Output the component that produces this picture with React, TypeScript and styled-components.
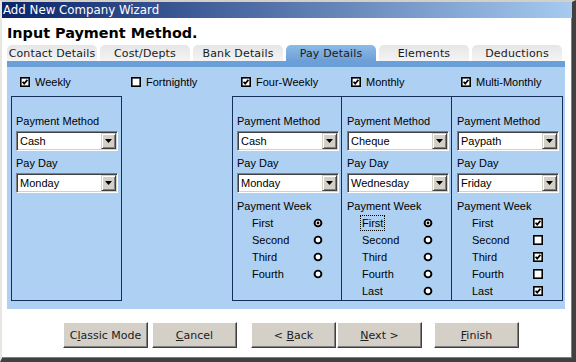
import React from "react";
import styled, { createGlobalStyle } from "styled-components";

const GlobalStyle = createGlobalStyle`
  html, body {
    margin: 0;
    padding: 0;
    background: #ffffff;
    overflow: hidden;
  }
`;

const Window = styled.div`
  width: 576px;
  height: 362px;
  box-sizing: border-box;
  border-style: solid;
  border-width: 2px 4px 4px 2px;
  border-color: #d4d0c8 #404040 #404040 #e8e6e0;
  box-shadow: inset -1px -1px 0 #808080;
  background: #ffffff;
  display: flex;
  flex-direction: column;
  font-family: "Liberation Sans", Arial, sans-serif;
`;

const TitleBar = styled.div`
  height: 16px;
  line-height: 16px;
  padding-left: 1px;
  background: linear-gradient(to right, #0a246a, #a6caf0);
  color: #ffffff;
  font-family: "DejaVu Sans", Verdana, sans-serif;
  font-size: 11.8px;
`;

const Heading = styled.h1`
  margin: 7px 0 0 5px;
  font-family: "DejaVu Sans", Verdana, sans-serif;
  font-size: 14.4px;
  line-height: 17px;
  font-weight: bold;
  color: #000;
`;

const TabRow = styled.div`
  display: flex;
  gap: 3px;
  margin: 3px 0 0 5px;
  height: 16px;
`;

const Tab = styled.div<{ $active?: boolean }>`
  width: 90px;
  height: 16px;
  box-sizing: border-box;
  padding-top: 1px;
  border-radius: 5px 5px 0 0;
  text-align: center;
  font-family: "DejaVu Sans", Verdana, sans-serif;
  font-size: 11px;
  letter-spacing: 0.15px;
  line-height: 15px;
  color: #1a1a1a;
  background: ${(p) =>
    p.$active
      ? "linear-gradient(#8dbbe8, #6d9fd7)"
      : "linear-gradient(#e6e6e6, #f4f4f4)"};
`;

const Panel = styled.div`
  margin-left: 5px;
  width: 554px;
  border-top: 6px solid #6b9fd7;
  background: #aed0f3;
  padding: 0 0 8px 4px;
`;

const Columns = styled.div`
  display: grid;
  grid-template-columns: 111px 110px 110px 110px 111px;
`;

const CheckRow = styled(Columns)`
  margin-top: 9px;
  height: 12px;
  margin-bottom: 8px;
`;

const CheckCell = styled.label`
  display: flex;
  align-items: center;
  gap: 5px;
  padding-left: 9px;
  font-size: 11px;
  color: #000;
`;

const GroupBox = styled.div<{ $col: number; $joined?: boolean }>`
  grid-column: ${(p) => p.$col};
  height: 205px;
  box-sizing: border-box;
  border: 1px solid #14305a;
  border-left: ${(p) => (p.$joined ? "none" : "1px solid #14305a")};
  padding: 17px 2px 0 ${(p) => (p.$joined ? "5px" : "4px")};
  display: flex;
  flex-direction: column;
`;

const FieldLabel = styled.div<{ $gap: number }>`
  margin-top: ${(p) => p.$gap}px;
  font-size: 11px;
  line-height: 14px;
  color: #000;
`;

const Dropdown = styled.div`
  margin-top: 3px;
  width: 102px;
  height: 20px;
  box-sizing: border-box;
  background: #ffffff;
  border-style: solid;
  border-width: 1px;
  border-color: #808080 #ffffff #ffffff #808080;
  box-shadow: inset 1px 1px 0 #404040, inset -1px -1px 0 #d4d0c8;
  display: flex;
  align-items: center;
  padding: 1px 1px 1px 3px;
`;

const DropValue = styled.span`
  flex: 1;
  font-size: 11px;
  color: #000;
`;

const DropButton = styled.span`
  width: 15px;
  height: 16px;
  box-sizing: border-box;
  background: #d4d0c8;
  border-style: solid;
  border-width: 1px;
  border-color: #d4d0c8 #404040 #404040 #d4d0c8;
  box-shadow: inset 1px 1px 0 #ffffff, inset -1px -1px 0 #808080;
  display: flex;
  align-items: center;
  justify-content: center;
`;

const WeekList = styled.div`
  margin-top: 1px;
  display: flex;
  flex-direction: column;
`;

const WeekRow = styled.div`
  height: 17px;
  display: grid;
  grid-template-columns: 61px 12px;
  align-items: center;
  padding-left: 15px;
  font-size: 11px;
  color: #000;
`;

const WeekText = styled.span<{ $focus?: boolean }>`
  justify-self: start;
  outline: ${(p) => (p.$focus ? "1px dotted #000" : "none")};
  outline-offset: 1px;
`;

const ButtonBar = styled.div`
  display: flex;
  margin: 13px 0 0 61px;
`;

const Button = styled.button<{ $gap: number }>`
  margin-left: ${(p) => p.$gap}px;
  width: 85px;
  height: 26px;
  box-sizing: border-box;
  padding: 0;
  background: #d4d0c8;
  border-style: solid;
  border-width: 1px;
  border-color: #ffffff #404040 #404040 #ffffff;
  box-shadow: inset -1px -1px 0 #808080;
  font-family: "DejaVu Sans", Verdana, sans-serif;
  font-size: 11px;
  color: #202020;
`;

const Key = styled.span`
  text-decoration: underline;
`;

const Check = ({ on }: { on: boolean }) => (
  <svg width="10" height="10" viewBox="0 0 10 10">
    <rect x="0.8" y="0.8" width="8.4" height="8.4" fill="#fff" stroke="#000" strokeWidth="1.6" />
    {on && <polyline points="2.6,4.8 4.2,6.6 7.4,2.9" fill="none" stroke="#000" strokeWidth="1.7" />}
  </svg>
);

const Radio = ({ on }: { on: boolean }) => (
  <svg width="10" height="10" viewBox="0 0 10 10">
    <circle cx="5" cy="5" r="3.4" fill="#fff" stroke="#000" strokeWidth="1.9" />
    {on && <circle cx="5" cy="5" r="1.4" fill="#000" />}
  </svg>
);

const Arrow = () => (
  <svg width="7" height="4" viewBox="0 0 7 4">
    <polygon points="0,0 7,0 3.5,4" fill="#000" />
  </svg>
);

const Select = ({ value }: { value: string }) => (
  <Dropdown>
    <DropValue>{value}</DropValue>
    <DropButton>
      <Arrow />
    </DropButton>
  </Dropdown>
);

type Week = { name: string; on: boolean; focus?: boolean };

type Group = {
  col: number;
  joined?: boolean;
  method: string;
  day: string;
  kind?: "radio" | "check";
  weeks?: Week[];
};

const groups: Group[] = [
  { col: 1, method: "Cash", day: "Monday" },
  {
    col: 3,
    method: "Cash",
    day: "Monday",
    kind: "radio",
    weeks: [
      { name: "First", on: true },
      { name: "Second", on: false },
      { name: "Third", on: false },
      { name: "Fourth", on: false },
    ],
  },
  {
    col: 4,
    joined: true,
    method: "Cheque",
    day: "Wednesday",
    kind: "radio",
    weeks: [
      { name: "First", on: true, focus: true },
      { name: "Second", on: false },
      { name: "Third", on: false },
      { name: "Fourth", on: false },
      { name: "Last", on: false },
    ],
  },
  {
    col: 5,
    joined: true,
    method: "Paypath",
    day: "Friday",
    kind: "check",
    weeks: [
      { name: "First", on: true },
      { name: "Second", on: false },
      { name: "Third", on: true },
      { name: "Fourth", on: false },
      { name: "Last", on: true },
    ],
  },
];

const frequencies = [
  { name: "Weekly", on: true },
  { name: "Fortnightly", on: false },
  { name: "Four-Weekly", on: true },
  { name: "Monthly", on: true },
  { name: "Multi-Monthly", on: true },
];

const tabs = ["Contact Details", "Cost/Depts", "Bank Details", "Pay Details", "Elements", "Deductions"];

export default function App() {
  return (
    <>
      <GlobalStyle />
      <Window>
        <TitleBar>Add New Company Wizard</TitleBar>
        <Heading>Input Payment Method.</Heading>
        <TabRow>
          {tabs.map((t) => (
            <Tab key={t} $active={t === "Pay Details"}>
              {t}
            </Tab>
          ))}
        </TabRow>
        <Panel>
          <CheckRow>
            {frequencies.map((f) => (
              <CheckCell key={f.name}>
                <Check on={f.on} />
                {f.name}
              </CheckCell>
            ))}
          </CheckRow>
          <Columns>
            {groups.map((g) => (
              <GroupBox key={g.col} $col={g.col} $joined={g.joined}>
                <FieldLabel $gap={0}>Payment Method</FieldLabel>
                <Select value={g.method} />
                <FieldLabel $gap={5}>Pay Day</FieldLabel>
                <Select value={g.day} />
                {g.weeks && (
                  <>
                    <FieldLabel $gap={6}>Payment Week</FieldLabel>
                    <WeekList>
                      {g.weeks.map((w) => (
                        <WeekRow key={w.name}>
                          <WeekText $focus={w.focus}>{w.name}</WeekText>
                          {g.kind === "radio" ? <Radio on={w.on} /> : <Check on={w.on} />}
                        </WeekRow>
                      ))}
                    </WeekList>
                  </>
                )}
              </GroupBox>
            ))}
          </Columns>
        </Panel>
        <ButtonBar>
          <Button $gap={0}>
            C<Key>l</Key>assic Mode
          </Button>
          <Button $gap={4}>
            <Key>C</Key>ancel
          </Button>
          <Button $gap={14}>
            &lt; <Key>B</Key>ack
          </Button>
          <Button $gap={1}>
            <Key>N</Key>ext &gt;
          </Button>
          <Button $gap={12}>
            <Key>F</Key>inish
          </Button>
        </ButtonBar>
      </Window>
    </>
  );
}
